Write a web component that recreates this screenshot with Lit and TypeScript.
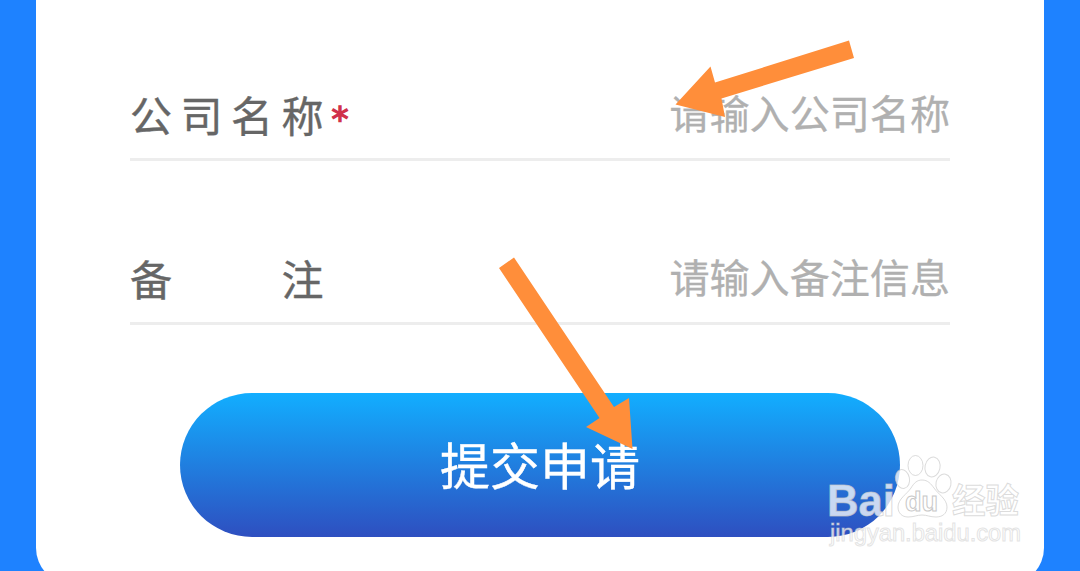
import { LitElement, html, css } from "lit";
import { customElement, property } from "lit/decorators.js";

@customElement("form-row")
export class FormRow extends LitElement {
  @property() label = "";
  @property() hint = "";
  @property({ type: Boolean }) required = false;

  static styles = css`
    :host {
      display: block;
    }

    .row {
      display: flex;
      align-items: center;
      box-sizing: border-box;
      height: 94px;
      border-bottom: 3px solid #ededed;
    }

    .label {
      width: 193.5px;
      padding-top: 2px;
      font-size: 42px;
      line-height: 60px;
      color: #666;
      -webkit-text-stroke: 0.4px #666;
      text-align: justify;
      text-align-last: justify;
    }

    .star {
      margin-left: 8px;
      padding-top: 13px;
      font-family: "DejaVu Sans", sans-serif;
      font-size: 34px;
      line-height: 42px;
      color: #d0304a;
      -webkit-text-stroke: 1.4px #d0304a;
    }

    .hint {
      margin-left: auto;
      padding-bottom: 2px;
      font-size: 40.1px;
      line-height: 56px;
      color: #b0b0b0;
      -webkit-text-stroke: 0.3px #b0b0b0;
      white-space: nowrap;
    }
  `;

  render() {
    return html`
      <div class="row">
        <span class="label">${this.label}</span>
        ${this.required ? html`<span class="star">*</span>` : ""}
        <span class="hint">${this.hint}</span>
      </div>
    `;
  }
}

@customElement("app-root")
export class AppRoot extends LitElement {
  static styles = css`
    :host {
      display: block;
      position: relative;
      box-sizing: border-box;
      height: 571px;
      padding: 0 36px;
      overflow: hidden;
      background: #1e82ff;
      font-family: "Noto Sans CJK SC", sans-serif;
    }

    .card {
      display: flex;
      flex-direction: column;
      gap: 70px;
      box-sizing: border-box;
      height: 584px;
      padding: 67px 94px 0;
      border-radius: 0 0 36px 36px;
      background: #fff;
    }

    .submit {
      align-self: center;
      width: 720px;
      height: 144px;
      margin-top: -2px;
      padding: 0 0 4px;
      border: none;
      border-radius: 72px;
      background: linear-gradient(#12aeff, #2e4fc0);
      color: #fff;
      font-family: inherit;
      font-size: 50px;
      line-height: 72px;
      -webkit-text-stroke: 0.4px #fff;
    }

    /* Arrows and watermark lie over the form */
    .overlay {
      position: absolute;
      top: 0;
      left: 0;
      pointer-events: none;
    }

    .arrow {
      fill: #ff8e3a;
    }

    .mark {
      fill: #fff;
      fill-opacity: 0.75;
      stroke: #c8c8c8;
      stroke-opacity: 0.65;
      stroke-width: 1;
    }

    .brand {
      font: bold 45px "Liberation Sans", sans-serif;
    }

    .du {
      font: bold 27px "Liberation Sans", sans-serif;
      stroke-opacity: 1;
    }

    .cn {
      font: bold 34px "Noto Sans CJK SC", sans-serif;
    }

    .url {
      font: 23px "Liberation Sans", sans-serif;
      stroke-opacity: 0.5;
    }
  `;

  render() {
    return html`
      <div class="card">
        <form-row label="公司名称" hint="请输入公司名称" required></form-row>
        <form-row label="备注" hint="请输入备注信息"></form-row>
        <button class="submit">提交申请</button>
      </div>
      <svg class="overlay" width="1080" height="571" viewBox="0 0 1080 571">
        <g class="arrow">
          <path d="M849 40.5 L854 58 L721.500 98.500 L725 117 L675.500 104.500 L710.500 66.500 L715 82.500 Z" />
          <path d="M499 268 L514 257.500 L614 407 L629 398 L632.500 449 L586 427 L599.500 418 Z" />
        </g>
        <g class="mark">
          <text class="brand" x="827" y="515.500" textLength="68" lengthAdjust="spacingAndGlyphs">Bai</text>
          <ellipse cx="902.500" cy="479" rx="7" ry="9.500" transform="rotate(-12 902.500 479)" />
          <ellipse cx="915.500" cy="465.500" rx="7.500" ry="10" />
          <ellipse cx="932.500" cy="467" rx="7.500" ry="10" transform="rotate(12 932.500 467)" />
          <ellipse cx="943.500" cy="483.500" rx="7.500" ry="9.500" transform="rotate(12 943.500 483.500)" />
          <path d="M922 480 C928 480 931 484 934 488 C938 494 947 499 947 507 C947 514 942 517 936 517 C930 517 927 515 922 515 C917 515 914 517 908 517 C902 517 898 513 898 507 C898 499 907 494 911 488 C914 483 917 480 922 480 Z" />
          <text class="du" x="905" y="511" textLength="33" lengthAdjust="spacingAndGlyphs">du</text>
          <text class="cn" x="952" y="513" textLength="67" lengthAdjust="spacingAndGlyphs">经验</text>
          <text class="url" x="830" y="541" textLength="191" lengthAdjust="spacingAndGlyphs">jingyan.baidu.com</text>
        </g>
      </svg>
    `;
  }
}
